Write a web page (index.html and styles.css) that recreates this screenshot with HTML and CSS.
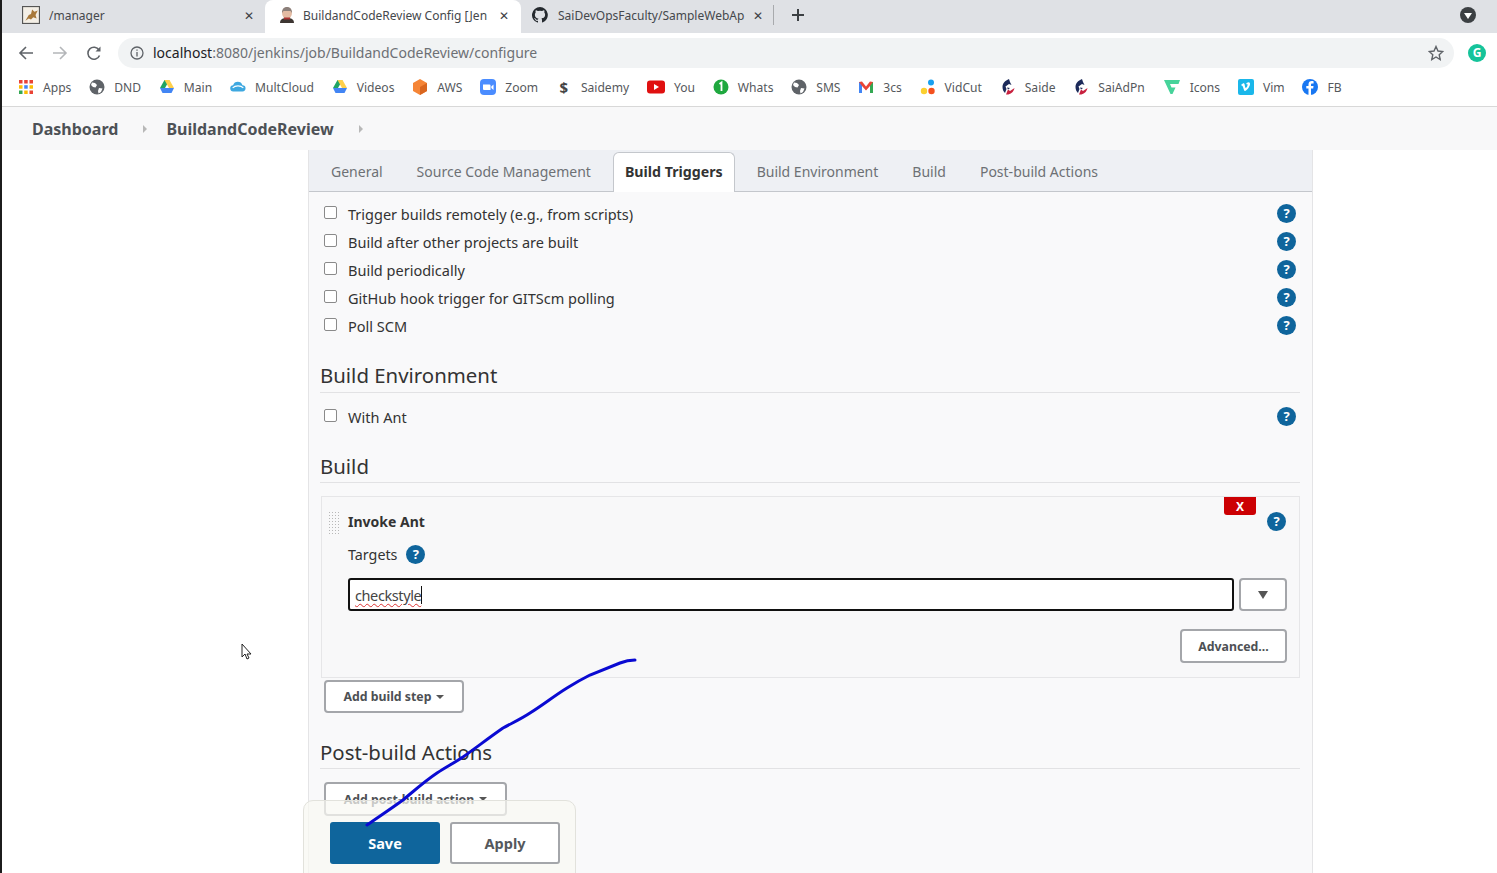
FILE: index.html
```html
<!DOCTYPE html>
<html lang="en">
<head>
    <meta charset="UTF-8">
    <title>BuildandCodeReview Config [Jenkins]</title>
    <link rel="stylesheet" href="styles.css">
</head>
<body>
    <svg class="defs" width="0" height="0">
        <symbol id="globe" viewBox="0 0 16 16"><circle cx="8" cy="8" r="7.5" fill="#5f6368"/><path d="M3 3.500l3 .5 2 2-1.500 2.500L4 8 2 6zM10 9l3.500.5L12 13l-2.500 1.500L9 12z" fill="#fff"/></symbol>
        <symbol id="drive" viewBox="0 0 16 16"><path d="M5.500 1h5L6 9H1z" fill="#1fa463"/><path d="M10.500 1L15 9h-5L5.500 1z" fill="#ffd04b"/><path d="M1 9h14l-2.500 5h-9z" fill="#4285f4"/></symbol>
        <symbol id="saide" viewBox="0 0 16 16"><path d="M9 0C5 1.500 2.500 4.500 2.500 8c0 2.500 1 4.500 2.500 6l1.500-4L5.500 7.500 9 5l2.500 1L10 3z" fill="#1c2a5a"/><path d="M6 15.500c4 .5 7.500-2 8.500-6.500L10 12 8 10.500z" fill="#c8213f"/><path d="M7 8.500l3 .5-2 1.500z" fill="#1c2a5a"/></symbol>
    </svg>

    <div class="tabstrip">
        <div class="tab">
            <svg class="tab-icon tab-icon-big" viewBox="0 0 16 16"><rect x=".5" y=".5" width="15" height="15" fill="#f4efe6" stroke="#555"/><path d="M3 13l3-5 2-1 1-4 2 2 3-1-2 4 1 3-3-1-2 2-2-1z" fill="#a9793b"/></svg>
            <span class="tab-title">/manager</span>
            <span class="tab-close">&#10005;</span>
        </div>
        <div class="tab tab-active">
            <svg class="tab-icon" viewBox="0 0 16 16"><path d="M1 16c0-4 3-5 7-5s7 1 7 5z" fill="#3d3632"/><ellipse cx="8" cy="6" rx="5" ry="6" fill="#e3bba3"/><path d="M3 6c0-4 2-6 5-6s5 2 5 6l-1.500-2-7 0z" fill="#8b7f7a"/><rect x="5" y="10.500" width="6" height="2" fill="#a33"/></svg>
            <span class="tab-title">BuildandCodeReview Config [Jen</span>
            <span class="tab-close">&#10005;</span>
        </div>
        <div class="tab tab-last">
            <svg class="tab-icon" viewBox="0 0 16 16"><path fill="#24292e" d="M8 0a8 8 0 0 0-2.500 15.600c.4.1.5-.2.500-.4v-1.400c-2.200.5-2.700-1-2.700-1-.4-.9-.9-1.200-.9-1.200-.7-.5.100-.5.100-.5.800.1 1.200.8 1.200.8.700 1.200 1.900.9 2.300.7.100-.5.300-.9.500-1.100-1.800-.2-3.600-.9-3.600-4 0-.9.300-1.600.8-2.100-.1-.2-.4-1 .1-2.100 0 0 .7-.2 2.200.8a7.600 7.600 0 0 1 4 0c1.500-1 2.200-.8 2.200-.8.400 1.100.2 1.900.1 2.100.5.600.8 1.300.8 2.100 0 3.100-1.900 3.700-3.700 3.900.3.300.6.700.6 1.500v2.200c0 .2.100.5.600.4A8 8 0 0 0 8 0z"/></svg>
            <span class="tab-title">SaiDevOpsFaculty/SampleWebAp</span>
            <span class="tab-close">&#10005;</span>
        </div>
        <svg class="new-tab" viewBox="0 0 14 14"><path d="M7 1v12M1 7h12" stroke="#3c4043" stroke-width="2"/></svg>
        <svg class="profile-down" viewBox="0 0 16 16"><circle cx="8" cy="8" r="8" fill="#3c4043"/><path d="M4 6h8l-4 6z" fill="#fff"/></svg>
    </div>

    <div class="chrome-body">
        <div class="toolbar">
            <svg class="nav-btn" viewBox="0 0 16 16"><path d="M15 8H2M8 2L2 8l6 6" fill="none" stroke="#5f6368" stroke-width="1.600"/></svg>
            <svg class="nav-btn" viewBox="0 0 16 16"><path d="M1 8h13M8 2l6 6-6 6" fill="none" stroke="#b4b6b9" stroke-width="1.600"/></svg>
            <svg class="nav-btn" viewBox="0 0 16 16"><path d="M13.500 10.500a6 6 0 1 1-.5-5.500" fill="none" stroke="#5f6368" stroke-width="1.600"/><path d="M14.500 1.500v5h-5z" fill="#5f6368"/></svg>
            <div class="omnibox">
                <svg class="info-icon" viewBox="0 0 14 14"><circle cx="7" cy="7" r="6" fill="none" stroke="#5f6368" stroke-width="1.300"/><path d="M7 6v4.500M7 3.500v1.300" stroke="#5f6368" stroke-width="1.300"/></svg>
                <span class="url"><span class="url-host">localhost</span>:8080/jenkins/job/BuildandCodeReview/configure</span>
                <svg class="star" viewBox="0 0 16 16"><path d="M8 1.500l2 4.500 4.800.5-3.600 3.200 1 4.800L8 12l-4.200 2.500 1-4.800L1.200 6.500 6 6z" fill="none" stroke="#5f6368" stroke-width="1.400"/></svg>
            </div>
            <div class="grammarly">G</div>
        </div>

        <div class="bookmarks">
            <div class="bm"><svg viewBox="0 0 16 16"><rect x="1" y="1" width="3.500" height="3.500" fill="#ea4335"/><rect x="6.200" y="1" width="3.500" height="3.500" fill="#ea4335"/><rect x="11.500" y="1" width="3.500" height="3.500" fill="#ea4335"/><rect x="1" y="6.200" width="3.500" height="3.500" fill="#fbbc05"/><rect x="6.200" y="6.200" width="3.500" height="3.500" fill="#4285f4"/><rect x="11.500" y="6.200" width="3.500" height="3.500" fill="#fbbc05"/><rect x="1" y="11.500" width="3.500" height="3.500" fill="#34a853"/><rect x="6.200" y="11.500" width="3.500" height="3.500" fill="#fbbc05"/><rect x="11.500" y="11.500" width="3.500" height="3.500" fill="#ea4335"/></svg>Apps</div>
            <div class="bm"><svg><use href="#globe"/></svg>DND</div>
            <div class="bm"><svg><use href="#drive"/></svg>Main</div>
            <div class="bm"><svg viewBox="0 0 18 16"><path d="M4 13a3.500 3.500 0 0 1-.5-7A5.500 5.500 0 0 1 14 6a3.500 3.500 0 0 1 0 7z" fill="#3ea8e0"/><path d="M3 9c3-3 9-3 12 0" fill="none" stroke="#fff" stroke-width="1.300"/></svg>MultCloud</div>
            <div class="bm"><svg><use href="#drive"/></svg>Videos</div>
            <div class="bm"><svg viewBox="0 0 16 16"><path d="M8 0l7 4v8l-7 4-7-4V4z" fill="#f58536"/><path d="M8 8l7-4v8l-7 4z" fill="#d9661f"/></svg>AWS</div>
            <div class="bm"><svg viewBox="0 0 16 16"><rect width="16" height="16" rx="4" fill="#4a8cff"/><path d="M3 5.500h6.500a1 1 0 0 1 1 1V11H4a1 1 0 0 1-1-1zM11.300 7.500L13.500 5.500v5.500l-2.200-2z" fill="#fff"/></svg>Zoom</div>
            <div class="bm"><span class="dollar">$</span>Saidemy</div>
            <div class="bm"><svg class="yt" viewBox="0 0 18 14"><rect width="18" height="13" y=".5" rx="3" fill="#e01010"/><path d="M7 4l5 3-5 3z" fill="#fff"/></svg>You</div>
            <div class="bm"><svg viewBox="0 0 16 16"><circle cx="8" cy="8" r="7.500" fill="#1fa83f"/><path d="M6.500 5l2-1.500V12" fill="none" stroke="#fff" stroke-width="1.800"/></svg>Whats</div>
            <div class="bm"><svg><use href="#globe"/></svg>SMS</div>
            <div class="bm"><svg viewBox="0 0 16 16"><path d="M1 14V3l3-.5 4 5 4-5 3 .5v11h-3V7L8 11.500 4 7v7z" fill="#ea4335"/><path d="M1 14V3l3 4v7z" fill="#4285f4"/><path d="M15 14V3l-3 4v7z" fill="#34a853"/></svg>3cs</div>
            <div class="bm"><svg viewBox="0 0 16 16"><circle cx="11" cy="3.500" r="3" fill="#18a0f0"/><circle cx="4" cy="12" r="3.200" fill="#fbd030"/><circle cx="11.500" cy="12" r="3.200" fill="#f4511e"/></svg>VidCut</div>
            <div class="bm"><svg><use href="#saide"/></svg>Saide</div>
            <div class="bm"><svg><use href="#saide"/></svg>SaiAdPn</div>
            <div class="bm"><svg class="icons8" viewBox="0 0 18 16"><path d="M1 1h16l-1.500 4H7l1.500 3.500h4L9.500 15h-2z" fill="#46d39a"/></svg>Icons</div>
            <div class="bm"><svg viewBox="0 0 16 16"><rect width="16" height="16" rx="2" fill="#1ab7ea"/><path d="M3 6c2-2 3-2.500 3.500-1 .4 1.500.6 4 1.300 4s2-2.500 1.700-3.500c-.3-.8-1.200-.4-1.500 0 .5-2.500 4.500-3.500 4 0-.4 2.500-3.500 6.500-5 6.500S5.500 7 4 6.800z" fill="#fff"/></svg>Vim</div>
            <div class="bm"><svg viewBox="0 0 16 16"><circle cx="8" cy="8" r="8" fill="#1877f2"/><path d="M9 16V9.500h2.200l.3-2.500H9V5.700c0-.8.3-1.200 1.300-1.200h1.300V2.300C11 2.200 10.400 2.100 9.800 2.100 7.800 2.100 6.500 3.300 6.500 5.400V7H4.300v2.500h2.200V16z" fill="#fff"/></svg>FB</div>
        </div>

        <div class="breadcrumb">
            <span class="crumb">Dashboard</span>
            <span class="crumb-sep"></span>
            <span class="crumb">BuildandCodeReview</span>
            <span class="crumb-sep"></span>
        </div>

        <div class="main">
            <div class="config">
                <div class="config-tabs">
                    <span class="config-tab">General</span>
                    <span class="config-tab">Source Code Management</span>
                    <span class="config-tab config-tab-active">Build Triggers</span>
                    <span class="config-tab">Build Environment</span>
                    <span class="config-tab">Build</span>
                    <span class="config-tab">Post-build Actions</span>
                </div>

                <div class="config-body">
                    <div class="option"><span class="check"></span><span class="option-label">Trigger builds remotely (e.g., from scripts)</span><span class="help">?</span></div>
                    <div class="option"><span class="check"></span><span class="option-label">Build after other projects are built</span><span class="help">?</span></div>
                    <div class="option"><span class="check"></span><span class="option-label">Build periodically</span><span class="help">?</span></div>
                    <div class="option"><span class="check"></span><span class="option-label">GitHub hook trigger for GITScm polling</span><span class="help">?</span></div>
                    <div class="option"><span class="check"></span><span class="option-label">Poll SCM</span><span class="help">?</span></div>

                    <h2 class="section-title section-env">Build Environment</h2>
                    <div class="option"><span class="check"></span><span class="option-label">With Ant</span><span class="help">?</span></div>

                    <h2 class="section-title section-build">Build</h2>
                    <div class="step">
                        <div class="step-handle"></div>
                        <button class="delete-btn">X</button>
                        <div class="step-head"><span class="step-name">Invoke Ant</span><span class="help help-step">?</span></div>
                        <div class="targets"><span>Targets</span><span class="help">?</span></div>
                        <div class="target-row">
                            <div class="target-input"><span class="spell">checkstyle</span><span class="caret"></span></div>
                            <button class="btn btn-drop"><span class="drop-arrow"></span></button>
                        </div>
                        <div class="advanced-row"><button class="btn btn-advanced">Advanced...</button></div>
                    </div>
                    <button class="btn btn-add btn-step">Add build step<span class="mini-arrow"></span></button>

                    <h2 class="section-title section-post">Post-build Actions</h2>
                    <button class="btn btn-add btn-post">Add post-build action<span class="mini-arrow"></span></button>
                </div>
            </div>

            <div class="save-bar">
                <button class="btn-save">Save</button>
                <button class="btn-apply">Apply</button>
            </div>

            <svg class="cursor" viewBox="0 0 12 18"><path d="M1 1v13l3-3 2 5 2-1-2-4h4z" fill="#fff" stroke="#222" stroke-width="1"/></svg>
            <svg class="pen-stroke" viewBox="364 657 280 172"><path d="M367 825C380 816 392 808 403 800C415 790 425 781 437 773C446 767 454 763 463 757C477 747 490 737 503 728C512 723 521 719 530 713C543 705 554 696 567 688C575 683 582 679 590 675C600 671 610 667 620 663C625 661 630 660 635 660" fill="none" stroke="#0a0ad2" stroke-width="3" stroke-linecap="round"/></svg>
        </div>
    </div>
</body>
</html>
```

FILE: styles.css
```css
* {
    box-sizing: border-box;
}
html, body {
    height: 100%;
}
body {
    margin: 0;
    overflow: hidden;
    background-color: #fff;
    color: #333;
    font-family: "Noto Sans", "Open Sans", Arial, sans-serif;
}
button {
    font-family: inherit;
}
.defs {
    position: absolute;
}

/* browser tabs */
.tabstrip {
    display: flex;
    align-items: center;
    height: 33px;
    background-color: #dfe1e5;
    border-left: 2px solid #1c1c1c;
}
.tab {
    display: flex;
    align-items: center;
    flex: none;
    width: 263px;
    height: 33px;
    padding: 0 10px 3px 20px;
}
.tab-active {
    width: 256px;
    padding-left: 14px;
    padding-right: 11px;
    background-color: #fff;
    border-radius: 8px 8px 0 0;
}
.tab-last {
    width: 253px;
    height: 20px;
    margin-bottom: 3px;
    padding: 0 9px 0 11px;
    border-right: 1px solid #a8aaad;
}
.tab-icon {
    flex: none;
    width: 16px;
    height: 16px;
    margin-right: 8px;
}
.tab-last .tab-icon {
    margin-right: 10px;
}
.tab-icon-big {
    width: 18px;
    height: 18px;
    margin-right: 9px;
}
.tab-title {
    flex: 1;
    overflow: hidden;
    white-space: nowrap;
    font-size: 12px;
    color: #45484c;
}
.tab-close {
    flex: none;
    width: 12px;
    margin-left: 4px;
    font-size: 12px;
    text-align: center;
    color: #3c4043;
}
.new-tab {
    width: 14px;
    height: 14px;
    margin-bottom: 3px;
    margin-left: 17px;
}
.profile-down {
    width: 16px;
    height: 16px;
    margin-bottom: 3px;
    margin-left: auto;
    margin-right: 21px;
}

.chrome-body {
    display: flex;
    flex-direction: column;
    height: 840px;
    border-left: 2px solid #1c1c1c;
}

/* address bar */
.toolbar {
    display: flex;
    align-items: center;
    flex: none;
    height: 39px;
    padding: 0 11px 0 16px;
}
.nav-btn {
    width: 16px;
    height: 16px;
    margin-right: 18px;
}
.nav-btn:nth-child(3) {
    margin-right: 16px;
}
.omnibox {
    display: flex;
    align-items: center;
    flex: 1;
    height: 30px;
    padding: 0 10px 0 12px;
    background-color: #f1f3f4;
    border-radius: 15px;
}
.info-icon {
    width: 14px;
    height: 14px;
    margin-right: 9px;
}
.url {
    font-size: 14px;
    color: #6d7074;
}
.url-host {
    color: #202124;
}
.star {
    width: 16px;
    height: 16px;
    margin-left: auto;
}
.grammarly {
    width: 18px;
    height: 18px;
    margin-left: 14px;
    border-radius: 50%;
    background-color: #15c39a;
    color: #fff;
    font-size: 12px;
    font-weight: 700;
    line-height: 18px;
    text-align: center;
}

/* bookmarks bar */
.bookmarks {
    display: flex;
    align-items: center;
    gap: 17.800px;
    flex: none;
    height: 35px;
    padding: 0 0 4px 16px;
    border-bottom: 1px solid #d8d8d8;
}
.bm {
    display: flex;
    align-items: center;
    gap: 9px;
    font-size: 12.100px;
    color: #55585c;
    white-space: nowrap;
}
.bm svg {
    width: 16px;
    height: 16px;
    flex: none;
}
.bm .yt, .bm .icons8 {
    width: 18px;
}
.dollar {
    width: 16px;
    font-size: 15px;
    font-weight: 700;
    color: #444;
    text-align: center;
}

/* jenkins breadcrumb */
.breadcrumb {
    display: flex;
    align-items: center;
    flex: none;
    height: 43px;
    padding-left: 30px;
    background-color: #f8f8f9;
}
.crumb {
    font-size: 16px;
    font-weight: 700;
    color: #4d5156;
}
.crumb-sep {
    width: 0;
    height: 0;
    margin: 0 19px 0 25px;
    border-left: 4px solid #b8b8b8;
    border-top: 4px solid transparent;
    border-bottom: 4px solid transparent;
}

/* config form */
.main {
    position: relative;
    flex: 1;
    overflow: hidden;
    padding-left: 306px;
}
.config {
    width: 1005px;
    min-height: 100%;
    background-color: #f9f9fa;
    border-left: 1px solid #e4e4e6;
    border-right: 1px solid #e4e4e6;
}
.config-tabs {
    display: flex;
    align-items: flex-end;
    height: 42px;
    background-color: #eef0f4;
    border-bottom: 1px solid #c4c7cc;
}
.config-tab {
    height: 40px;
    padding: 0 12px;
    margin-right: 10px;
    font-size: 14px;
    line-height: 42px;
    color: #6d7074;
    white-space: nowrap;
}
.config-tab:first-child {
    margin-left: 10px;
}
.config-tab-active {
    position: relative;
    top: 1px;
    padding: 0 11px;
    background-color: #fff;
    border: 1px solid #c4c7cc;
    border-bottom: none;
    border-radius: 6px 6px 0 0;
    font-size: 14.200px;
    font-weight: 700;
    line-height: 38px;
    color: #333;
}
.config-body {
    padding: 7px 12px 0 11px;
}
.option {
    display: flex;
    align-items: center;
    height: 28px;
    padding-left: 4px;
}
.check {
    flex: none;
    position: relative;
    top: -1px;
    width: 13px;
    height: 13px;
    margin-right: 11px;
    background-color: #fff;
    border: 1px solid #8a8a8a;
    border-radius: 2px;
}
.option-label {
    flex: 1;
    margin-top: 1px;
    font-size: 14.500px;
    color: #333;
}
.help {
    flex: none;
    width: 19px;
    height: 19px;
    margin-right: 4px;
    border-radius: 50%;
    background-color: #0f659c;
    color: #fff;
    font-size: 13px;
    font-weight: 700;
    line-height: 19px;
    text-align: center;
}
.section-title {
    margin: 0;
    padding-bottom: 3px;
    border-bottom: 1px solid #e2e2e4;
    font-size: 20.400px;
    font-weight: 400;
    line-height: 26px;
    color: #333;
}
.section-env {
    margin-top: 23px;
    margin-bottom: 9px;
    padding-bottom: 4px;
}
.section-build {
    margin-top: 23px;
    margin-bottom: 13px;
}
.section-post {
    margin-top: 26px;
    margin-bottom: 13px;
}

/* build step */
.step {
    position: relative;
    height: 182px;
    margin-left: 1px;
    padding: 12px 12px 0 26px;
    background-color: #f8f8f9;
    border: 1px solid #e6e6e8;
}
.step-handle {
    position: absolute;
    top: 14px;
    left: 6px;
    width: 12px;
    height: 25px;
    background-image: radial-gradient(circle, #b8b8b8 1px, transparent 1px);
    background-size: 3px 3px;
}
.delete-btn {
    position: absolute;
    top: 0;
    right: 43px;
    width: 32px;
    height: 18px;
    padding: 0;
    background-color: #cc0003;
    border: none;
    border-radius: 0 0 3px 3px;
    color: #fff;
    font-size: 12px;
    font-weight: 700;
}
.step-head {
    display: flex;
    align-items: center;
    justify-content: space-between;
    height: 24px;
}
.step-name {
    font-size: 14px;
    font-weight: 700;
    color: #333;
}
.help-step {
    margin-right: 1px;
}
.targets {
    display: flex;
    align-items: center;
    gap: 9px;
    height: 24px;
    margin-top: 9px;
    font-size: 14.300px;
}
.target-row {
    display: flex;
    gap: 5px;
    margin-top: 12px;
}
.target-input {
    display: flex;
    align-items: center;
    flex: 1;
    height: 33px;
    padding-left: 5px;
    background-color: #fff;
    border: 2px solid #111;
    border-radius: 3px;
    font-size: 14.500px;
    color: #444;
}
.spell {
    text-decoration: underline wavy #d33;
    text-decoration-thickness: 1px;
    text-underline-offset: 2px;
    letter-spacing: -.4px;
}
.caret {
    width: 1px;
    height: 18px;
    background-color: #111;
}
.btn {
    background-color: #fff;
    border: 2px solid #a4a6aa;
    border-radius: 4px;
    color: #4d5054;
    font-size: 12.300px;
    font-weight: 700;
}
.btn-drop {
    display: flex;
    align-items: center;
    justify-content: center;
    width: 48px;
    height: 33px;
    padding: 0;
}
.drop-arrow {
    width: 0;
    height: 0;
    border-top: 8px solid #555;
    border-left: 5px solid transparent;
    border-right: 5px solid transparent;
}
.advanced-row {
    display: flex;
    justify-content: flex-end;
    margin-top: 18px;
}
.btn-advanced {
    width: 107px;
    height: 34px;
    padding: 0;
}
.btn-add {
    display: flex;
    align-items: center;
    justify-content: center;
    gap: 5px;
    height: 34px;
    margin-left: 4px;
    padding: 0;
}
.btn-step {
    width: 140px;
    height: 33px;
    margin-top: 2px;
}
.btn-post {
    width: 183px;
}
.mini-arrow {
    width: 0;
    height: 0;
    border-top: 4px solid #555;
    border-left: 4px solid transparent;
    border-right: 4px solid transparent;
}

/* floating over the form */
.save-bar {
    position: absolute;
    left: 301px;
    bottom: -5px;
    display: flex;
    gap: 10px;
    width: 273px;
    height: 78px;
    padding: 21px 0 0 26px;
    background-color: rgba(248, 248, 242, .72);
    border: 1px solid #e2e2dc;
    border-radius: 10px 10px 0 0;
}
.btn-save, .btn-apply {
    width: 110px;
    height: 42px;
    padding: 0;
    border-radius: 3px;
    font-size: 14.500px;
    font-weight: 700;
}
.btn-save {
    background-color: #0f659c;
    border: none;
    color: #fff;
}
.btn-apply {
    background-color: #fff;
    border: 2px solid #a4a6aa;
    color: #55585c;
}
.cursor {
    position: absolute;
    left: 239px;
    top: 493px;
    width: 12px;
    height: 18px;
}
.pen-stroke {
    position: absolute;
    left: 362px;
    top: 507px;
    width: 280px;
    height: 172px;
    overflow: visible;
}
```
